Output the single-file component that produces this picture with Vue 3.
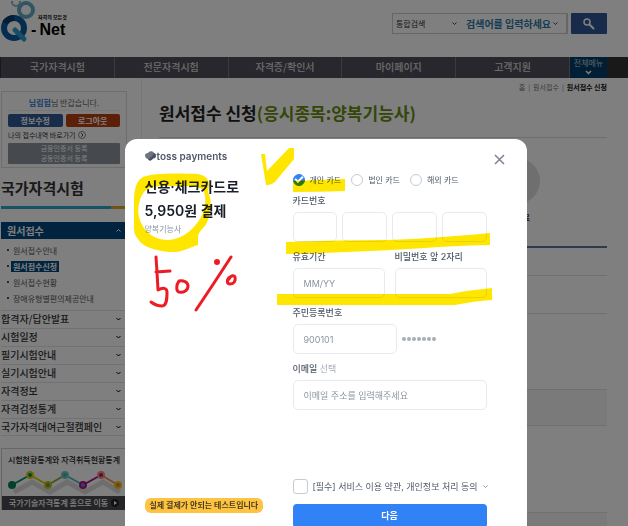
<script setup>
import { ref } from 'vue';

const navItems = ['국가자격시험', '전문자격시험', '자격증/확인서', '마이페이지', '고객지원'];

const subMenu = ref([
  { label: '원서접수안내', active: false },
  { label: '원서접수신청', active: true },
  { label: '원서접수현황', active: false },
  { label: '장애유형별편의제공안내', active: false }
]);

const sideMenu = ['합격자/답안발표', '시험일정', '필기시험안내', '실기시험안내', '자격정보', '자격검정통계', '국가자격대여근절캠페인'];

const cardTypes = [
  { value: 'personal', label: '개인 카드' },
  { value: 'company', label: '법인 카드' },
  { value: 'overseas', label: '해외 카드' }
];

const search = ref('');
const cardType = ref('personal');
const cardNumber = ref(['', '', '', '']);
const expiry = ref('');
const password = ref('');
const birth = ref('');
const email = ref('');
const agreed = ref(false);
const modalOpen = ref(true);

const closeModal = () => {
  modalOpen.value = false;
};
</script>

<template>
  <div class="page">
    <header class="header">
      <a href="#" class="logo" aria-label="Q-Net">
        <svg class="logo-mark" width="36" height="42" viewBox="0 0 36 42" fill="none">
          <circle cx="16" cy="1" r="4" stroke="#8fb4c4" stroke-width="2" />
          <circle cx="26" cy="9" r="7" stroke="#63adc6" stroke-width="4" />
          <circle cx="14" cy="27" r="10" stroke="#0a5aa0" stroke-width="6" />
          <path d="M5 22a10 10 0 0 1 9-5" stroke="#0a3c70" stroke-width="6" />
          <path d="M15 29l9 9" stroke="#2c9cc8" stroke-width="5" stroke-linecap="round" />
        </svg>
        <span class="logo-text">
          <small>자격의 모든것</small>
          <strong>-&#8201;Net</strong>
        </span>
      </a>
      <form class="search" @submit.prevent>
        <div class="search-box">
          <select class="search-select" aria-label="검색 구분">
            <option>통합검색</option>
          </select>
          <svg class="chevron" width="5" height="3" viewBox="0 0 5 3"><path d="M.5.5l2 2 2-2" /></svg>
          <input v-model="search" class="search-input" type="text" placeholder="검색어를 입력하세요" aria-label="검색어" />
          <svg class="chevron" width="5" height="3" viewBox="0 0 5 3"><path d="M.5.5l2 2 2-2" /></svg>
        </div>
        <button class="search-button" aria-label="검색">
          <svg width="12" height="12" viewBox="0 0 12 12" fill="none" stroke="#fff">
            <circle cx="4" cy="4" r="3" stroke-width="1.5" />
            <path d="M6.5 6.5l4 4" stroke-width="2" stroke-linecap="round" />
          </svg>
        </button>
      </form>
    </header>

    <nav class="nav">
      <div class="nav-list">
        <a v-for="item in navItems" :key="item" href="#" class="nav-item">{{ item }}</a>
      </div>
      <button class="nav-all">
        전체메뉴
        <svg width="7" height="5" viewBox="0 0 7 5" fill="none"><path d="M1 1l2.500 2.500L6 1" stroke="#fff" stroke-width="1.500" /></svg>
      </button>
    </nav>

    <div class="body">
      <aside class="sidebar">
        <div class="user-box">
          <p class="greeting"><b>님림헙</b>님 반갑습니다.</p>
          <div class="user-buttons">
            <button class="edit">정보수정</button>
            <button class="logout">로그아웃</button>
          </div>
          <a href="#" class="shortcut">나의 접수내역 바로가기
            <svg width="8" height="8" viewBox="0 0 8 8" fill="none"><circle cx="4" cy="4" r="3.500" stroke="#888" /><path d="M3.200 2.200L5 4 3.200 5.800" stroke="#246" /></svg>
          </a>
          <div class="certs">
            <a href="#">금융인증서 등록</a>
            <a href="#">공동인증서 등록</a>
          </div>
        </div>

        <h2 class="side-title">국가자격시험</h2>
        <button class="side-head">
          원서접수
          <svg class="chevron light" width="5" height="3" viewBox="0 0 5 3"><path d="M.5 2.500l2-2 2 2" /></svg>
        </button>
        <ul class="sub-menu">
          <li v-for="item in subMenu" :key="item.label">
            <a href="#" :class="{ active: item.active }">{{ item.label }}</a>
          </li>
        </ul>
        <ul class="side-menu">
          <li v-for="item in sideMenu" :key="item">
            <a href="#">{{ item }}
              <svg class="chevron bold" width="5" height="4" viewBox="0 0 5 4"><path d="M.5 1l2 2 2-2" /></svg>
            </a>
          </li>
        </ul>

        <a href="#" class="banner">
          <span class="banner-title">시험현황통계와 자격취득현황통계</span>
          <svg class="banner-chart" viewBox="0 0 124 26" fill="none">
            <path d="M10 21L28 11 46 21 63 11 81 21 99 11 116 21" stroke="#ddd" stroke-width="5" transform="translate(2 3)" />
            <path d="M10 17L28 7" stroke="#0a8a68" stroke-width="2" />
            <path d="M28 7l18 10" stroke="#d8c800" stroke-width="2" />
            <path d="M46 17L63 7" stroke="#8ba838" stroke-width="2" />
            <path d="M63 7l18 10" stroke="#4cb8bc" stroke-width="2" />
            <path d="M81 17L99 7" stroke="#b0107c" stroke-width="2" />
            <path d="M99 7l17 10" stroke="#f09050" stroke-width="2" />
            <circle cx="10" cy="17" r="4" fill="#088060" />
            <circle cx="28" cy="7" r="3" fill="#087" stroke="#dccc00" stroke-width="2" />
            <circle cx="46" cy="17" r="3" fill="#786" stroke="#bfc410" stroke-width="2" />
            <circle cx="63" cy="7" r="3" fill="#5aa" stroke="#70c8c8" stroke-width="2" />
            <circle cx="81" cy="17" r="3" fill="#58c" stroke="#b0107c" stroke-width="2" />
            <circle cx="99" cy="7" r="3" fill="#b17" stroke="#f09080" stroke-width="2" />
            <circle cx="116" cy="17" r="3" fill="#f07830" stroke="#f0c820" stroke-width="2" />
          </svg>
          <span class="banner-link">국가기술자격통계 홈으로 이동
            <svg width="8" height="8" viewBox="0 0 8 8"><circle cx="4" cy="4" r="4" fill="#222" /><path d="M3 2l3 2-3 2z" fill="#fff" /></svg>
          </span>
        </a>
      </aside>

      <main class="main">
        <div class="breadcrumb">
          <a href="#">홈</a><span>|</span><a href="#">원서접수</a><span>|</span><b>원서접수 신청</b>
        </div>
        <h1 class="title">원서접수 신청<em>(응시종목:양복기능사)</em></h1>
        <div class="steps">
          <div class="step">
            <span class="step-circle"></span>
            <b>접수완료</b>
          </div>
        </div>
        <div class="rows">
          <div class="row head"></div>
          <div class="row short"></div>
          <div class="row tall"></div>
          <div class="row shaded"></div>
          <div class="row last"></div>
          <div class="row shaded"></div>
        </div>
      </main>
    </div>

    <div v-if="modalOpen" class="overlay">
      <section class="modal" role="dialog" aria-label="toss payments">
        <div class="summary">
          <div class="brand">
            <svg width="11" height="10" viewBox="0 0 11 10">
              <path d="M0 5Q0 2 3 2Q4 0 6.500 .3Q8.500 .5 9 2Q11 2.500 11 5Q10.500 7.500 8 7.500Q7 9.500 5 9.500Q4 9.500 3 8Q.3 7.500 0 5z" fill="#6b7480" />
              <path d="M3 8Q7 6.500 9 2Q11 2.500 11 5Q10.500 7.500 8 7.500Q7 9.500 5 9.500Q4 9.500 3 8z" fill="#4a525f" />
            </svg>
            toss payments
          </div>
          <h2 class="amount">신용·체크카드로<br />5,950원 결제</h2>
          <p class="product">양복기능사</p>
          <p class="test-badge">실제 결제가 안되는 테스트입니다</p>
        </div>

        <form class="form" @submit.prevent>
          <div class="card-types">
            <label v-for="type in cardTypes" :key="type.value" class="card-type">
              <input v-model="cardType" type="radio" name="card-type" :value="type.value" />
              {{ type.label }}
            </label>
          </div>
          <div class="field">
            <label for="card-0">카드번호</label>
            <div class="inputs">
              <input v-for="(part, i) in cardNumber" :id="`card-${i}`" :key="i" v-model="cardNumber[i]" type="text" maxlength="4" :aria-label="`카드번호 ${i + 1}`" />
            </div>
          </div>
          <div class="field-pair">
            <div class="field">
              <label for="expiry">유효기간</label>
              <input id="expiry" v-model="expiry" type="text" placeholder="MM/YY" />
            </div>
            <div class="field">
              <label for="password">비밀번호 앞 2자리</label>
              <input id="password" v-model="password" type="password" maxlength="2" />
            </div>
          </div>
          <div class="field">
            <label for="birth">주민등록번호</label>
            <div class="inputs birth-inputs">
              <input id="birth" v-model="birth" type="text" placeholder="900101" />
              <span class="dots"><i v-for="n in 7" :key="n"></i></span>
            </div>
          </div>
          <div class="field">
            <label for="email">이메일 <span>선택</span></label>
            <input id="email" v-model="email" type="email" placeholder="이메일 주소를 입력해주세요" />
          </div>
          <label class="agree">
            <input v-model="agreed" type="checkbox" />
            [필수] 서비스 이용 약관, 개인정보 처리 동의
            <svg class="chevron" width="5" height="3" viewBox="0 0 5 3"><path d="M.5.5l2 2 2-2" /></svg>
          </label>
          <button class="next">다음</button>
        </form>

        <button class="close" aria-label="닫기" @click="closeModal">
          <svg width="11" height="11" viewBox="0 0 11 11"><path d="M1 1l9 9M10 1l-9 9" stroke="#7b8591" stroke-width="1.500" /></svg>
        </button>

        <!-- pen notes -->
        <svg class="notes" width="402" height="387" viewBox="125 139 402 387" fill="none">
          <g fill="#ffe600">
            <path fill-rule="evenodd" d="M143 177C150 173 180 173 198 174Q209 176 209 185L208 192Q212 200 210 208Q209 222 204 227Q198 233 198 237V245C190 247 182 253 170 252C155 251 141 246 138 239Q133 234 134 225V200Q134 182 143 177zM146 190C139 196 137 210 139 217C142 229 152 240 168 240C184 239 196 228 203 213C206 205 206 194 203 190Q198 186 190 186H160Q150 187 146 190z" />
            <path d="M261 154h4l2 17 22-23h5v11l-19 23q-5 4-9 3z" />
            <path d="M293 181q25-1 52-2v12q-25 1-52 1z" />
            <path d="M286 242Q345 240 380 240T490 233v12Q450 246 425 248 360 252 286 254z" />
            <path d="M277 294H450Q470 290 492 288v12Q475 301 455 305H277z" />
          </g>
          <g stroke="#ed1c24" stroke-width="3" stroke-linecap="round" stroke-linejoin="round">
            <path d="M156 257l1 15 1 18c5-3 9-2 9 2 0 6 0 14-5 14-4 0-7-1-11-4M156 272l14-1" />
            <path d="M179 281c-3 4-3 10 0 11 4 1 9-1 9-6 0-4-5-6-9-5z" />
            <path d="M231 257l-17 26-18 27" />
            <circle cx="217" cy="262" r="1.500" />
            <path d="M230 277c-4 3-3 7 0 7 4 0 6-3 5-7-1-2-4-2-6 2z" />
          </g>
        </svg>
      </section>
    </div>
  </div>
</template>

<style>
body {
  overflow: hidden;
}
</style>

<style scoped>
.page {
  min-height: 100vh;
  display: flex;
  flex-direction: column;
  background: #fff;
  color: #333;
  font-family: 'Noto Sans CJK KR', sans-serif;
  font-size: 8px;
  line-height: 12px;
}

.page * {
  box-sizing: border-box;
}

a {
  color: inherit;
  text-decoration: none;
}

button,
input,
select {
  font: inherit;
  color: inherit;
  border: none;
  padding: 0;
  margin: 0;
  min-width: 0;
}

button {
  cursor: pointer;
}

h1,
h2,
p,
ul {
  margin: 0;
  padding: 0;
}

ul {
  list-style: none;
}

.chevron {
  flex: none;
  fill: none;
  stroke: #444;
}

.chevron.light {
  stroke: #fff;
}

.chevron.bold {
  stroke: #000;
}

.header {
  height: 57px;
  display: flex;
  justify-content: space-between;
  padding-right: 21px;
}

.logo {
  display: flex;
  gap: 1px;
}

.logo-mark {
  margin-top: 1px;
}

.logo-text {
  padding-top: 13px;
  color: #000;
}

.logo-text small {
  display: block;
  font-size: 5px;
  font-weight: 700;
  line-height: 8px;
  padding-left: 1px;
}

.logo-text strong {
  display: block;
  margin-left: -6px;
  font-family: 'Liberation Sans', sans-serif;
  font-size: 16px;
  line-height: 17px;
}

.search {
  display: flex;
  gap: 3px;
  height: 21px;
  margin-top: 13px;
}

.search-box {
  width: 176px;
  display: flex;
  align-items: center;
  padding: 0 8px 0 3px;
  border: 1px solid #ccc;
  border-right-width: 2px;
}

.search-select {
  width: 56px;
  appearance: none;
  background: transparent;
}

.search-input {
  flex: 1;
  margin-left: 9px;
  background: transparent;
  font-size: 10px;
  font-weight: 700;
  outline: none;
}

.search-input::placeholder {
  color: #2c78a8;
}

.search-button {
  display: flex;
  align-items: center;
  justify-content: center;
  width: 36px;
  background: #315694;
  border-radius: 1px;
}

.nav {
  display: flex;
  height: 21px;
  padding: 0 21px 0 1px;
  background: #333;
}

.nav-list {
  flex: 1;
  display: flex;
}

.nav-item {
  flex: 1;
  background: #504f5b;
  color: #d8d8d8;
  border-right: 1px solid #77777f;
  text-align: center;
  font-size: 10px;
  font-weight: 500;
  line-height: 19px;
}

.nav-all {
  width: 37px;
  display: flex;
  flex-direction: column;
  align-items: center;
  gap: 1px;
  background: #003d68;
  color: #b9cbd9;
  font-size: 8px;
}

.body {
  flex: 1;
  display: flex;
}

.sidebar {
  width: 142px;
  padding: 13px 14px 0 1px;
  border-right: 1px solid #eee;
}

.user-box {
  height: 77px;
  padding: 4px 6px;
  border: 1px solid #ddd;
  background: #fcfcfc;
}

.greeting {
  text-align: center;
  border-bottom: 1px solid #eee;
  color: #666;
  line-height: 14px;
}

.greeting b {
  color: #2f75e0;
}

.user-buttons {
  display: flex;
  gap: 3px;
  margin-top: 3px;
}

.user-buttons button {
  flex: 1;
  height: 13px;
  border-radius: 2px;
  color: #fff;
  font-weight: 700;
  line-height: 12px;
}

.edit {
  background: #305a94;
}

.logout {
  background: #b84012;
}

.shortcut {
  display: flex;
  align-items: center;
  gap: 2px;
  height: 16px;
  font-size: 7px;
}

.certs {
  display: flex;
  flex-direction: column;
  height: 21px;
  border-radius: 1px;
  background: #8d939c;
  color: #fff;
  text-align: center;
  font-size: 7px;
  line-height: 10px;
}

.side-title {
  margin-top: 10px;
  padding-bottom: 8px;
  border-bottom: 3px solid #2ca6cf;
  border-image: linear-gradient(90deg, #2ca6cf 87%, #dfa72c 87%) 1;
  font-size: 15px;
  font-weight: 700;
  line-height: 20px;
}

.side-head {
  width: 100%;
  height: 17px;
  margin-top: 13px;
  padding: 0 6px;
  display: flex;
  align-items: center;
  justify-content: space-between;
  background: #00497f;
  color: #fff;
  font-size: 10px;
  font-weight: 700;
}

.sub-menu {
  padding: 3px 6px 4px;
  color: #555;
}

.sub-menu li {
  display: flex;
  align-items: center;
  height: 16px;
}

.sub-menu li::before {
  content: '';
  width: 2px;
  height: 2px;
  margin-right: 2px;
  background: #555;
}

.sub-menu a {
  padding: 0 2px;
  line-height: 11px;
}

.sub-menu .active {
  background: #00497f;
  color: #fff;
  font-weight: 700;
}

.side-menu li {
  height: 18px;
  border-top: 1px solid #e4e4e4;
}

.side-menu li:last-child {
  border-bottom: 1px solid #e4e4e4;
}

.side-menu a {
  display: flex;
  align-items: center;
  justify-content: space-between;
  padding-right: 6px;
  font-size: 10px;
  font-weight: 500;
  line-height: 16px;
}

.banner {
  display: block;
  margin-top: 12px;
  border: 1px solid #ccc;
  border-bottom: none;
  color: #222;
  font-weight: 500;
}

.banner-title {
  display: block;
  padding-top: 4px;
  text-align: center;
  line-height: 13px;
}

.banner-chart {
  display: block;
  height: 30px;
  width: 100%;
}

.banner-link {
  display: flex;
  align-items: center;
  justify-content: center;
  gap: 3px;
  height: 14px;
  background: #4a4a4e;
  color: #fff;
}

.main {
  flex: 1;
  padding: 3px 21px 0 17px;
}

.breadcrumb {
  display: flex;
  justify-content: flex-end;
  gap: 3px;
  font-size: 7px;
  color: #777;
}

.breadcrumb b {
  color: #111;
}

.title {
  padding: 8px 0 12px;
  border-bottom: 1px solid #ddd;
  color: #222;
  font-size: 17px;
  font-weight: 700;
  line-height: 24px;
}

.title em {
  color: #6a8c10;
  font-style: normal;
}

.steps {
  display: flex;
  justify-content: flex-end;
  height: 108px;
  padding: 20px 67px 0 0;
}

.step {
  display: flex;
  flex-direction: column;
  align-items: center;
  gap: 7px;
  width: 46px;
  font-size: 7px;
}

.step-circle {
  width: 46px;
  height: 46px;
  border-radius: 50%;
  background: #dedede;
}

.rows {
  border-top: 2px solid #58789f;
}

.row {
  height: 38px;
  border-bottom: 1px solid #e0e0e0;
}

.row.head {
  height: 28px;
}

.row.tall {
  height: 76px;
}

.row.shaded {
  height: 36px;
  background: #f5f5f5;
}

.row.last {
  height: 87px;
}

.row.shaded:last-child {
  height: 13px;
  border: none;
}

/* payment dialog */
.overlay {
  position: fixed;
  inset: 0;
  display: flex;
  justify-content: center;
  align-items: flex-start;
  padding: 139px 0 0 23px;
  overflow: hidden;
  background: rgba(0, 0, 0, 0.5);
}

.modal {
  position: relative;
  flex: none;
  width: 100%;
  max-width: 402px;
  display: flex;
  padding: 11px 40px 0 20px;
  background: #fff;
  border-radius: 12px 12px 0 0;
  color: #4e5968;
  font-family: Inter, 'Noto Sans CJK KR', sans-serif;
}

.summary {
  flex: 1;
  display: flex;
  flex-direction: column;
  align-items: flex-start;
  padding-bottom: 15px;
}

.brand {
  display: flex;
  align-items: center;
  gap: 1px;
  font-size: 10px;
  font-weight: 600;
}

.amount {
  margin-top: 13px;
  color: #191f28;
  font-size: 14px;
  font-weight: 600;
  line-height: 24px;
}

.product {
  color: #8b95a1;
  font-size: 8px;
}

.test-badge {
  margin-top: auto;
  padding: 0 5px;
  border-radius: 6px;
  background: #ffc342;
  color: #4a3c20;
  font-weight: 700;
  line-height: 15px;
}

.form {
  width: 194px;
  padding-top: 23px;
}

.card-types {
  display: flex;
  gap: 10px;
  height: 13px;
  margin-bottom: 8px;
}

.card-type {
  display: flex;
  align-items: center;
  gap: 5px;
  white-space: nowrap;
}

.card-type input {
  appearance: none;
  width: 12px;
  height: 12px;
  border: 1px solid #c5cbd2;
  border-radius: 50%;
}

.card-type input:checked {
  display: grid;
  place-items: center;
  background: #3182f6;
  border-color: #3182f6;
}

.card-type input:checked::before {
  content: '';
  width: 6px;
  height: 3px;
  margin-bottom: 2px;
  border: solid #fff;
  border-width: 0 0 2px 2px;
  transform: rotate(-45deg);
}

.field {
  flex: 1;
  min-width: 0;
  margin-bottom: 8px;
}

.field label {
  display: block;
  margin-bottom: 4px;
  font-size: 9px;
  font-weight: 500;
  line-height: 14px;
}

.field label span {
  color: #a5adb7;
  font-weight: 400;
}

.field input {
  display: block;
  width: 100%;
  height: 30px;
  padding: 0 10px;
  border: 1px solid #e8eaed;
  border-radius: 5px;
  background: #fff;
  font-size: 9px;
}

.field input::placeholder {
  color: #8b95a1;
}

.field-pair {
  display: flex;
  gap: 10px;
}

.inputs {
  display: flex;
  align-items: center;
  gap: 5px;
}

.field .birth-inputs input {
  width: 104px;
}

.dots {
  display: flex;
  gap: 1px;
}

.dots i {
  width: 4px;
  height: 4px;
  border-radius: 50%;
  background: #a5aeb9;
}

.agree {
  display: flex;
  align-items: center;
  gap: 5px;
  height: 15px;
  margin-top: 69px;
  padding-right: 2px;
  font-size: 9px;
  white-space: nowrap;
}

.agree input {
  appearance: none;
  flex: none;
  width: 15px;
  height: 15px;
  border: 1px solid #c5cbd2;
  border-radius: 3px;
}

.agree .chevron {
  margin-left: auto;
  stroke: #8b95a1;
}

.next {
  width: 100%;
  height: 24px;
  margin-top: 10px;
  border-radius: 4px;
  background: #3182f6;
  color: #fff;
  font-size: 9px;
  font-weight: 700;
}

.close {
  position: absolute;
  top: 15px;
  right: 22px;
  display: flex;
  background: none;
}

.notes {
  position: absolute;
  top: 0;
  left: 0;
  mix-blend-mode: multiply;
  pointer-events: none;
}
</style>
